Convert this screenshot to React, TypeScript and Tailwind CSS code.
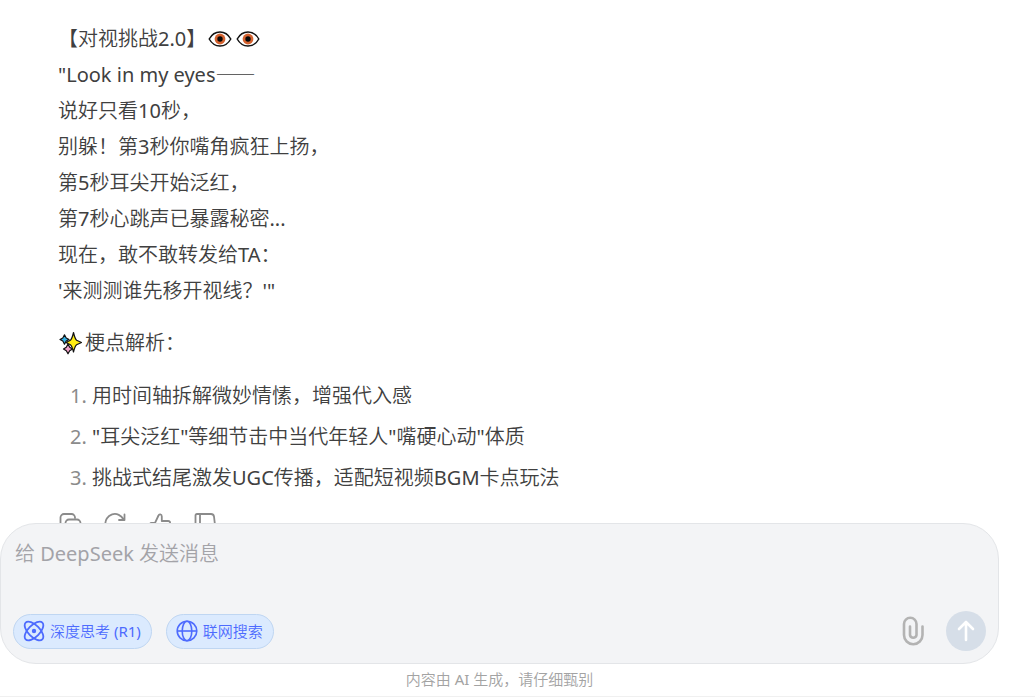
import { useState } from "react";

const lines = [
  "说好只看10秒，",
  "别躲！第3秒你嘴角疯狂上扬，",
  "第5秒耳尖开始泛红，",
  "第7秒心跳声已暴露秘密...",
  "现在，敢不敢转发给TA：",
  "'来测测谁先移开视线？'\"",
];

const points = [
  "用时间轴拆解微妙情愫，增强代入感",
  "\"耳尖泛红\"等细节击中当代年轻人\"嘴硬心动\"体质",
  "挑战式结尾激发UGC传播，适配短视频BGM卡点玩法",
];

function Eye() {
  return (
    <svg viewBox="0 0 24 18" className="w-6 h-[18px]" role="img" aria-label="eye">
      <path d="M1.2 9C4 4 8 2 12 2S20 4 22.8 9C20 14 16 16 12 16S4 14 1.2 9Z" fill="#fff" stroke="#111" strokeWidth="1.5" />
      <circle cx="12" cy="9" r="5.4" fill="#d4622f" />
      <circle cx="12" cy="9" r="2.7" fill="#080808" />
    </svg>
  );
}

function Sparkles() {
  return (
    <svg viewBox="0 0 24 24" className="w-6 h-6" role="img" aria-label="sparkles" stroke="#111" strokeWidth="1.2" strokeLinejoin="round">
      <path d="M6.5 3.8L8.2 7L11 8.5L8.2 10L6.5 13.2L4.8 10L2 8.5L4.8 7Z" fill="#37b4e8" />
      <path d="M10 13L11.7 16.3L14.5 18L11.7 19.7L10 22.8L8.3 19.7L5.5 18L8.3 16.3Z" fill="#f0a0c8" />
      <path d="M15.5 1.5Q17 8 18.6 9.2L23.5 11.5L18.6 13.8Q17 15 15.5 21Q14 15 12.4 13.8L8 11.5L12.4 9.2Q14 8 15.5 1.5Z" fill="#ffec10" />
    </svg>
  );
}

const iconProps = {
  viewBox: "0 0 24 24",
  className: "w-6 h-6",
  fill: "none",
  stroke: "currentColor",
  strokeWidth: 1.8,
  strokeLinecap: "round" as const,
  strokeLinejoin: "round" as const,
};

function Toolbar() {
  return (
    <div className="mt-4 flex gap-[21px] text-[#8b8b8b]">
      <button aria-label="复制">
        <svg {...iconProps}>
          <path d="M5 17.5H4.5A2.5 2.5 0 0 1 2.5 15V5.5A3.5 3.5 0 0 1 6 2H13.5A3.5 3.5 0 0 1 17 5.5V6" />
          <rect x="7.5" y="7.5" width="15" height="15" rx="3.5" />
        </svg>
      </button>
      <button aria-label="重新生成">
        <svg {...iconProps}>
          <path d="M2.5 13A9.5 9.5 0 0 1 20.5 7.5M21.5 2.5V8H16M21.5 12.5A9.5 9.5 0 0 1 5 18" />
        </svg>
      </button>
      <button aria-label="喜欢">
        <svg {...iconProps}>
          <path d="M2 12.5Q2 11 3.5 11H7L10.5 3.5C11 2 13.8 1.8 13.8 4.5V9H20Q22.5 9 22 11.5L20.5 19Q20 21.5 17.5 21.5H3.5Q2 21.5 2 20ZM7 11V21.5" />
        </svg>
      </button>
      <button aria-label="不喜欢">
        <svg {...iconProps}>
          <path d="M2.5 3.5Q2.5 2 4 2H18Q20.5 2 21 4.5L22 13Q22 15.5 19.5 15.5H14V20Q13 23 10.5 20.5L7 14H4Q2.5 14 2.5 12.5ZM7 2V14" />
        </svg>
      </button>
    </div>
  );
}

function AtomIcon() {
  return (
    <svg viewBox="0 0 22 22" className="w-[22px] h-[22px]" fill="none" stroke="currentColor" strokeWidth="1.8">
      <ellipse cx="11" cy="11" rx="11.8" ry="5.8" transform="rotate(45 11 11)" />
      <ellipse cx="11" cy="11" rx="11.8" ry="5.8" transform="rotate(-45 11 11)" />
      <circle cx="11" cy="11" r="2.2" fill="currentColor" stroke="none" />
    </svg>
  );
}

function GlobeIcon() {
  return (
    <svg viewBox="0 0 22 22" className="w-[22px] h-[22px]" fill="none" stroke="currentColor" strokeWidth="1.6">
      <circle cx="11" cy="11" r="9.8" />
      <ellipse cx="11" cy="11" rx="4.8" ry="9.8" />
      <path d="M1.2 11H20.8" />
    </svg>
  );
}

const pill =
  "flex h-[35px] items-center gap-[5px] rounded-full border border-[#bfd6f2] bg-[#dbeafe] pr-2.5 pl-[9px] text-[15px] text-[#4d6bfe]";

function Composer() {
  const [message, setMessage] = useState("");
  const [think, setThink] = useState(true);
  const [search, setSearch] = useState(true);

  return (
    <div className="flex flex-col rounded-[36px] border border-[#e3e5e8] bg-[#f3f4f6] p-3">
      <textarea
        aria-label="消息"
        rows={2}
        value={message}
        onChange={(e) => setMessage(e.target.value)}
        placeholder="给 DeepSeek 发送消息"
        className="block w-full resize-none bg-transparent px-0.5 text-[20px] leading-9 text-[#404040] outline-none placeholder:text-[#a3a3a8]"
      />
      <div className="mt-[3px] flex items-center">
        <button aria-pressed={think} onClick={() => setThink(!think)} className={pill}>
          <AtomIcon />
          深度思考 (R1)
        </button>
        <button aria-pressed={search} onClick={() => setSearch(!search)} className={`${pill} ml-3.5`}>
          <GlobeIcon />
          联网搜索
        </button>
        <button aria-label="上传附件" className="ml-auto text-[#b3b3b3]">
          <svg viewBox="0 0 24 30" className="w-6 h-[30px]" fill="none" stroke="currentColor" strokeWidth="2.6" strokeLinecap="round">
            <path d="M21.5 10.5V19A9 9 0 0 1 3 19V8A6 6 0 0 1 15.500 8V19A3.3 3.3 0 0 1 9 19V10.5" />
          </svg>
        </button>
        <button aria-label="发送" className="ml-[21px] flex size-10 items-center justify-center rounded-full bg-[#d6dee8] text-white">
          <svg viewBox="0 0 20 22" className="w-5 h-[22px]" fill="none" stroke="currentColor" strokeWidth="2.6" strokeLinecap="round" strokeLinejoin="round">
            <path d="M10 20V2M3 9L10 2L17 9" />
          </svg>
        </button>
      </div>
    </div>
  );
}

export default function App() {
  return (
    <div
      lang="zh-CN"
      className="flex h-screen flex-col border-b border-[#f0f0f0] bg-white pr-9 font-['Noto_Sans','Noto_Sans_CJK_SC_DemiLight','Noto_Sans_CJK_SC',sans-serif] text-[#404040]"
    >
      <main className="min-h-0 flex-1 overflow-hidden px-[58px] pt-[21px] text-[20px] leading-9">
        <div className="flex items-center gap-0.5">
          【对视挑战2.0】
          <span className="flex gap-1">
            <Eye />
            <Eye />
          </span>
        </div>
        <p>
          "Look in my eyes
          <span className="font-['Noto_Sans_CJK_SC',sans-serif] leading-none">——</span>
        </p>
        {lines.map((line) => (
          <p key={line}>{line}</p>
        ))}
        <p className="mt-4 flex items-center gap-[3px]">
          <Sparkles />
          梗点解析：
        </p>
        <ol className="mt-[17px] flex list-decimal flex-col gap-[5px] pl-[34px]">
          {points.map((point) => (
            <li key={point} className="marker:text-[#8b8b8b]">{point}</li>
          ))}
        </ol>
        <Toolbar />
      </main>
      <Composer />
      <p className="pt-[3px] pb-[5px] text-center text-[15px] leading-6 text-[#a3a3a3]">内容由 AI 生成，请仔细甄别</p>
    </div>
  );
}
